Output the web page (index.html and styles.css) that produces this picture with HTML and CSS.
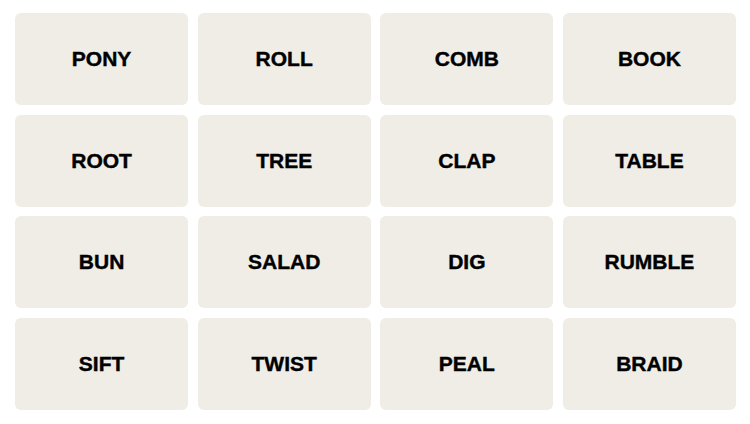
FILE: index.html
```html
<!DOCTYPE html>
<html>
<head>
<meta charset="utf-8">
<link rel="stylesheet" href="styles.css">
</head>
<body>
<div class="board">
  <div class="tile">PONY</div>
  <div class="tile">ROLL</div>
  <div class="tile">COMB</div>
  <div class="tile">BOOK</div>
  <div class="tile">ROOT</div>
  <div class="tile">TREE</div>
  <div class="tile">CLAP</div>
  <div class="tile">TABLE</div>
  <div class="tile">BUN</div>
  <div class="tile">SALAD</div>
  <div class="tile">DIG</div>
  <div class="tile">RUMBLE</div>
  <div class="tile">SIFT</div>
  <div class="tile">TWIST</div>
  <div class="tile">PEAL</div>
  <div class="tile">BRAID</div>
</div>
</body>
</html>
```
FILE: styles.css
```css
html, body {
  margin: 0;
  padding: 0;
  background: #ffffff;
}
body {
  width: 750px;
  height: 424px;
  overflow: hidden;
}
.board {
  box-sizing: border-box;
  padding: 13px 14px 0 15px;
  display: grid;
  grid-template-columns: repeat(4, 1fr);
  grid-template-rows: repeat(4, 92px);
  gap: 9.5px;
}
.tile {
  background: #efede6;
  border-radius: 6px;
  display: flex;
  align-items: center;
  justify-content: center;
  font-family: "Liberation Sans", Arial, sans-serif;
  font-weight: 700;
  font-size: 21px;
  color: #000000;
  -webkit-text-stroke: 0.4px #000000;
  text-transform: uppercase;
}
```
